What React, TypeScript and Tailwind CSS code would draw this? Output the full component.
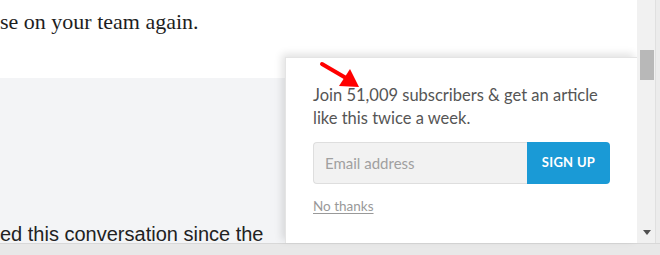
import React from "react";

export default function App() {
  return (
    <div className="w-[660px] h-[255px] overflow-hidden flex flex-col bg-white">
      <div className="flex h-[243px]">
        <div className="relative w-[637px] h-full flex flex-col">
          <div className="h-[78px] bg-white pt-[8px]">
            <p className="whitespace-nowrap text-[#1e1e1e] text-[22px] leading-[28px]" style={{ fontFamily: '"Liberation Serif", "Times New Roman", serif' }}>
              se on your team again.
            </p>
          </div>
          <div className="flex-1 bg-[#f3f4f6] flex flex-col justify-end">
            <p className="whitespace-nowrap text-[#222] text-[20px] leading-[18px]" style={{ fontFamily: '"Liberation Sans", Arial, sans-serif' }}>
              ed this conversation since the
            </p>
          </div>

          <div className="absolute left-[285px] top-[57px] w-[352px] h-[186px] bg-white shadow-[-3px_-3px_8px_rgba(0,0,0,0.12)] border-l border-t border-[#e4e4e4] pl-[27px] pt-[26px]" style={{ fontFamily: 'Lato, "Open Sans", sans-serif' }}>
            <svg className="absolute left-[33px] top-[3px]" width="46" height="32" viewBox="0 0 46 32">
              <line x1="3" y1="3" x2="27" y2="17" stroke="#ff0000" strokeWidth="4" strokeLinecap="round" />
              <polygon points="40,26 20,25 31,8" fill="#ff0000" />
            </svg>
            <p className="text-[#555] text-[16.5px] leading-[23px] w-[310px]">
              Join 51,009 subscribers &amp; get an article
              <br />
              like this twice a week.
            </p>
            <div className="flex mt-[12px] h-[42px] w-[297px]">
              <div className="w-[214px] h-full bg-[#f2f2f2] border border-[#dedede] border-r-0 rounded-l-[4px] flex items-center pl-[11px] text-[15px] text-[#a0a0a0]">
                Email address
              </div>
              <div className="flex-1 h-full bg-[#1a9ad6] rounded-r-[4px] flex items-center justify-center text-white text-[13px] font-bold tracking-[0.3px]">
                SIGN UP
              </div>
            </div>
            <div className="mt-[14px] text-[13.5px] leading-[16px] text-[#999] underline underline-offset-2">
              No thanks
            </div>
          </div>
        </div>
        <div className="w-[23px] h-full flex">
          <div className="w-[19px] h-full bg-[#f1f1f1] relative border-r border-[#e0e0e0]">
            <div className="absolute left-[3px] top-[50px] w-[14px] h-[30px] bg-[#b8b8b8]" />
            <svg className="absolute left-[6px] top-[230px]" width="8" height="5" viewBox="0 0 8 5">
              <polygon points="0,0 8,0 4,5" fill="#505050" />
            </svg>
          </div>
          <div className="flex-1 bg-[#ececec]" />
        </div>
      </div>
      <div className="h-[12px] bg-[#e8e8e8] border-t border-[#d8d8d8]" />
    </div>
  );
}
